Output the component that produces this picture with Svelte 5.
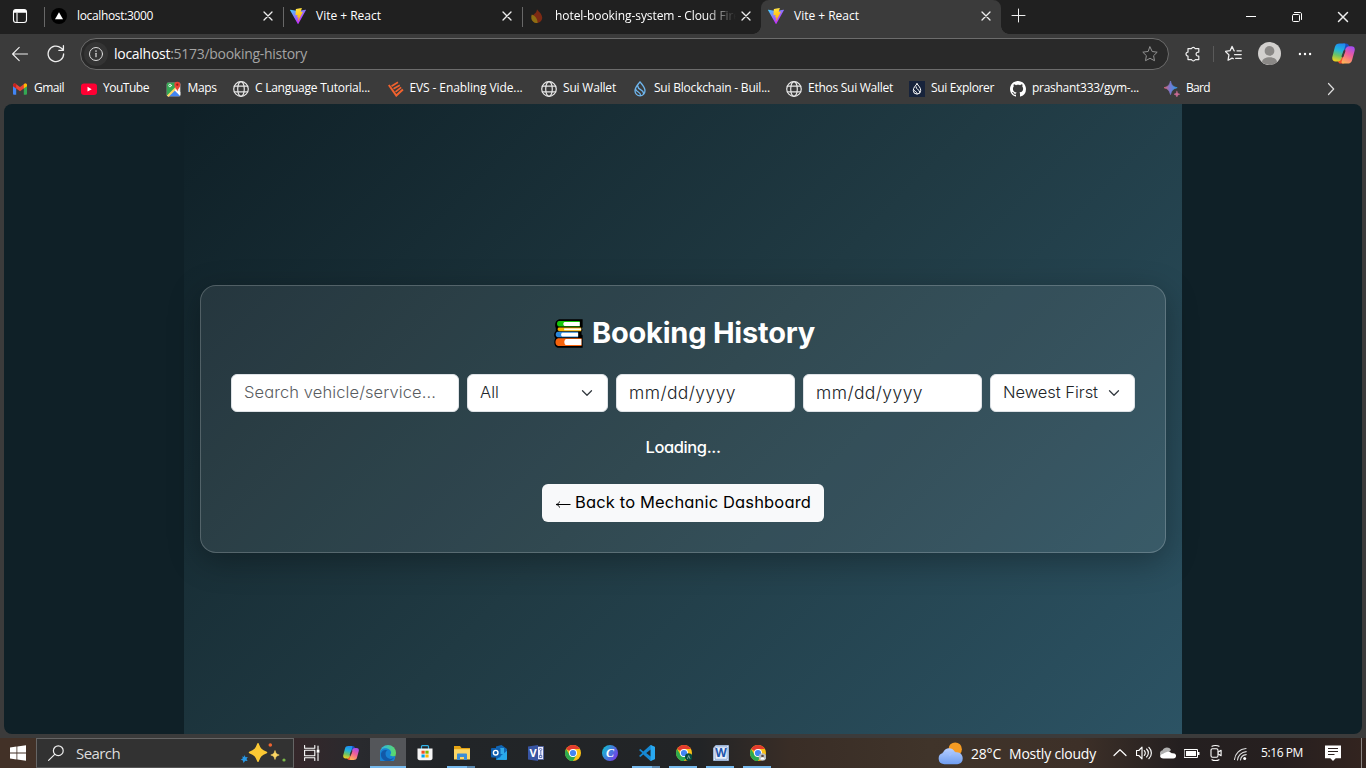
<script>
  // Spreads a label over the given width through its letter spacing.
  function fit(node, width) {
    const natural = node.getBoundingClientRect().width;
    node.style.letterSpacing = `${(width - natural) / node.textContent.length}px`;
  }

  const tabs = [
    { icon: 'next', title: 'localhost:3000', w: 76 },
    { icon: 'vite', title: 'Vite + React', w: 65 },
    { icon: 'flame', title: 'hotel-booking-system - Cloud Fire', w: 185 },
    { icon: 'vite', title: 'Vite + React', w: 65, active: true }
  ];

  const bookmarks = [
    { icon: 'gmail', title: 'Gmail', w: 30, slot: 69 },
    { icon: 'youtube', title: 'YouTube', w: 46, slot: 84.5 },
    { icon: 'maps', title: 'Maps', w: 29, slot: 67.5 },
    { icon: 'globe', title: 'C Language Tutorial...', w: 115, slot: 154.5 },
    { icon: 'evs', title: 'EVS - Enabling Vide...', w: 113, slot: 153.5 },
    { icon: 'globe', title: 'Sui Wallet', w: 53, slot: 91 },
    { icon: 'sui', title: 'Sui Blockchain - Buil...', w: 116, slot: 154 },
    { icon: 'globe', title: 'Ethos Sui Wallet', w: 85, slot: 123 },
    { icon: 'suibox', title: 'Sui Explorer', w: 63, slot: 101 },
    { icon: 'github', title: 'prashant333/gym-...', w: 107, slot: 154 },
    { icon: 'bard', title: 'Bard', w: 24, slot: 60 }
  ];

  const apps = [
    { icon: 'copilot' },
    { icon: 'edge', state: 'active' },
    { icon: 'store' },
    { icon: 'folder', state: 'multi' },
    { icon: 'outlook' },
    { icon: 'visio' },
    { icon: 'chrome' },
    { icon: 'canva' },
    { icon: 'vscode', state: 'multi' },
    { icon: 'chromea', state: 'open' },
    { icon: 'word', state: 'open' },
    { icon: 'chromeb', state: 'open' }
  ];

  const tray = ['up', 'volume', 'cloud', 'battery', 'meet', 'wifi'];
</script>

{#snippet icon(name, size = 16)}
  <svg class="icon" width={size} height={size} viewBox="0 0 16 16" fill="none" stroke-linecap="round" stroke-linejoin="round">
    {#if name === 'next'}
      <circle cx="8" cy="8" r="8" fill="#000" /><path d="M8 4.3 12 11.2H4z" fill="#fff" />
    {:else if name === 'vite'}
      <g transform="scale(.0623)">
        <path fill="url(#g-vite)" d="M255.153 37.938L134.897 252.976c-2.483 4.44-8.862 4.466-11.382.048L.875 37.958c-2.746-4.814 1.371-10.646 6.827-9.67l120.385 21.517a6.537 6.537 0 0 0 2.322-.004l117.867-21.483c5.438-.991 9.574 4.796 6.877 9.62Z" />
        <path fill="url(#g-bolt)" d="M185.432.063L96.44 17.501a3.268 3.268 0 0 0-2.634 3.014l-5.474 92.456a3.268 3.268 0 0 0 3.997 3.378l24.777-5.718c2.318-.535 4.413 1.507 3.936 3.838l-7.361 36.047c-.495 2.426 1.782 4.5 4.151 3.78l15.304-4.649c2.372-.72 4.652 1.36 4.15 3.788l-11.698 56.621c-.732 3.542 3.979 5.473 5.943 2.437l1.313-2.028l72.516-144.72c1.215-2.423-.88-5.186-3.54-4.672l-25.505 4.922c-2.396.462-4.435-1.77-3.759-4.114l16.646-57.705c.677-2.35-1.37-4.583-3.769-4.113Z" />
      </g>
    {:else if name === 'flame'}
      <path fill="#7c2a14" d="M8 1.2C9 3.4 12.9 5.2 13.2 9.5c.2 3-2.3 5.4-5.2 5.4S3 13 3 10c0-2 1.3-3.200 2.800-4.400C7.200 4.400 7.800 3 8 1.200z" />
      <path fill="#8d6d12" d="M2.800 6.500C5.500 7.500 8.500 10 8.600 15 5 15.200 2.500 13 2.300 10c-.1-1.500.1-2.500.5-3.500z" />
    {:else if name === 'close'}
      <path d="m4 4 8 8M12 4 4 12" stroke="#eee" stroke-width="1.3" />
    {:else if name === 'gmail'}
      <path fill="#4285f4" d="M1 4.500v8.300c0 .5.4.9.900.9h2.300V7.500z" /><path fill="#34a853" d="M11.800 13.700h2.300c.5 0 .9-.4.9-.9V4.500l-3.200 3z" />
      <path fill="#ea4335" d="M1 4.800V3.900C1 2.600 2.500 2 3.500 2.700L8 6l4.500-3.300C13.500 2 15 2.600 15 3.900v.9L11.800 7.600 8 10.300 4.200 7.600z" /><path fill="#fbbc04" d="M11.800 3.200v4.400L15 5.200V3.900c0-1.300-1.500-1.900-2.500-1.200z" /><path fill="#c5221f" d="M1 3.900v1.300l3.200 2.400V3.200l-.7-.5C2.500 2 1 2.600 1 3.900z" />
    {:else if name === 'youtube'}
      <rect y="2.500" width="16" height="11.500" rx="3" fill="#ff0033" /><path d="m6.500 5.800 4.200 2.400-4.200 2.400z" fill="#fff" />
    {:else if name === 'maps'}
      <rect x=".8" y="1.800" width="13.500" height="13.500" rx="1.200" fill="#eee" /><path d="M.8 14V3c0-.7.500-1.200 1.200-1.200h8L9 8l-8.200 7z" fill="#34a853" /><path d="m2.500 15.300 6-6 5.800 6z" fill="#4285f4" /><path d="m1 14.500 8-8 1.500 1.500-8 8z" fill="#fdd663" /><path d="m8.500 9 5.800 5.500V11l-4-3z" fill="#fff" />
      <circle cx="4" cy="4.500" r="1.300" stroke="#fff" stroke-width=".8" />
      <path d="M11.300 10.500C11 8 8.300 6.500 8.300 3.700a3 3 0 1 1 6 0c0 2.800-2.700 4.300-3 6.800z" fill="#ea4335" /><circle cx="11.300" cy="3.700" r="1.100" fill="#8e1f16" />
    {:else if name === 'globe'}
      <g stroke="#e6e6e6" stroke-width="1.200"><circle cx="8" cy="8" r="7.300" /><ellipse cx="8" cy="8" rx="3.300" ry="7.300" /><path d="M1.300 5.200h13.400M1.300 10.800h13.400" /></g>
    {:else if name === 'evs'}
      <path d="M.8 4 8.300 14.600l6.600-6" stroke="#f2622e" stroke-width="2" stroke-linecap="butt" stroke-linejoin="miter" /><path d="M3.500 5.200 10 1.200M5.500 7.800l6.300-3.600M7.500 10.800l5.700-4.500" stroke="#f2622e" stroke-width="1.600" stroke-linecap="butt" />
    {:else if name === 'sui'}
      <path d="M8 .8c2 2.700 5 5.400 5 9a5 5 0 0 1-10 0c0-3.600 3-6.300 5-9zM6 5.200c-.8 4 6.500 3 5.500 8M3.800 8.500c1.200 3.200 4.600 2 4.800 5.800" stroke="#6fb6ee" stroke-width="1.300" />
    {:else if name === 'suibox'}
      <path fill="#17233b" d="M0 0h16v16H0z" /><path d="M8 2.800c1.300 1.800 3.700 3.800 3.700 6.600a3.700 3.700 0 0 1-7.400 0c0-2.800 2.400-4.800 3.700-6.600zM7 5.800c-.5 3 4 2.200 3.700 5.500M4.700 8.800c1 2.300 3.400 1.400 3.500 4" stroke="#fff" stroke-width="1" />
    {:else if name === 'github'}
      <path fill="#fff" d="M8 0C3.580 0 0 3.580 0 8c0 3.540 2.290 6.530 5.470 7.590.4.070.55-.17.55-.38 0-.19-.01-.82-.01-1.490-2.010.37-2.530-.49-2.690-.94-.09-.23-.48-.94-.82-1.130-.28-.15-.68-.52-.01-.53.63-.01 1.080.58 1.230.82.72 1.210 1.870.87 2.330.66.07-.52.28-.87.51-1.070-1.780-.2-3.640-.89-3.640-3.950 0-.87.31-1.590.82-2.150-.08-.2-.36-1.020.08-2.120 0 0 .67-.21 2.200.82.64-.18 1.320-.27 2-.27s1.360.09 2 .27c1.530-1.040 2.200-.82 2.200-.82.44 1.100.16 1.920.08 2.120.51.56.82 1.270.82 2.150 0 3.070-1.870 3.750-3.650 3.950.29.25.54.73.54 1.480 0 1.070-.01 1.930-.01 2.200 0 .21.15.46.55.38A8.010 8.010 0 0 0 16 8c0-4.420-3.580-8-8-8z" />
    {:else if name === 'bard'}
      <path d="M6.500 0C7.500 4.200 9 5.700 13.200 6.700 9 7.700 7.500 9.400 6.500 13.600 5.500 9.400 4 7.700-.2 6.700 4 5.700 5.500 4.200 6.500 0z" fill="url(#g-bard)" stroke="url(#g-bard)" stroke-width=".7" /><path d="M12.900 10.300c.5 1.900 1 2.400 2.900 2.900-1.900.5-2.400 1-2.900 2.800-.5-1.800-1-2.300-2.900-2.800 1.900-.5 2.400-1 2.900-2.900z" fill="#c86a94" stroke="#c86a94" stroke-width=".5" />
    {:else if name === 'workspace'}
      <rect x="1.500" y="1.500" width="13" height="13" rx="2.500" stroke="#fff" stroke-width="1.100" /><path d="M1.500 4.800V4c0-1.500 1-2.500 2.500-2.500h8c1.500 0 2.500 1 2.500 2.500v.8z" fill="#fff" /><path d="M5 5v9.500" stroke="#fff" stroke-width="1.100" />
    {:else if name === 'back'}
      <path d="M15.500 8H.8M7.200 1.300.6 8l6.600 6.700" stroke="#eee" stroke-width="1.150" />
    {:else if name === 'reload'}
      <path d="M14.800 8A6.900 6.900 0 1 1 12.500 2.700l1.800 1.600M14.600.6v4.100h-4.100" stroke="#eee" stroke-width="1.150" />
    {:else if name === 'info'}
      <circle cx="8" cy="8" r="6.500" stroke="#ddd" /><path d="M8 7.300v3.400" stroke="#ddd" stroke-width="1.200" /><circle cx="8" cy="5.100" r=".8" fill="#ddd" />
    {:else if name === 'star'}
      <path d="m8 .9 2.200 4.600 5 .7-3.600 3.500.9 5L8 12.300l-4.500 2.400.9-5L.8 6.200l5-.7z" stroke="#929292" />
    {:else if name === 'puzzle'}
      <path d="M3 2.600h3.500a1.900 1.900 0 0 1 3.600 0h3.700v3.500c-3.600-.3-3.600 4.400 0 4.100v3.400h-3.600a1.900 1.900 0 0 1-3.600 0H3v-3.500a2 2 0 0 1 0-4z" stroke="#eee" stroke-width="1.200" />
    {:else if name === 'favorites'}
      <path d="M8.800 5.500H8.500L6.700 1.300 4.800 5.400l-4.300.7 3.200 3.200-.8 5 3.800-2 1.200.6M11.300 5.500h4M9 9h6.300M10 12.500h5.300" stroke="#eee" stroke-width="1.200" />
    {:else if name === 'avatar'}
      <circle cx="8" cy="8" r="8" fill="#d2d0ce" /><circle cx="8" cy="6.200" r="3.400" fill="#8a8886" /><path d="M2.800 14c0-4.500 10.400-4.500 10.400 0A8 8 0 0 1 2.800 14z" fill="#8a8886" />
    {:else if name === 'dots'}
      <g fill="#fff"><circle cx="2.200" cy="8" r="1.350" /><circle cx="8" cy="8" r="1.350" /><circle cx="13.800" cy="8" r="1.350" /></g>
    {:else if name === 'copilot'}
      <path d="M7.500 1h2.300c1.300 0 1.800.7 2.200 2l.6 1.800c-2.200-.3-3.100.4-3.700 2.200z" fill="#1a4fc0" />
      <path d="M8.500 15H6.200c-1.300 0-1.700-.7-2.100-2l-.6-1.800c2.200.3 3-.4 3.600-2.200z" fill="#f8502c" />
      <path d="M5.300 1h3c1.200 0 1.200.8.900 1.800L6.800 11c-.6 2-1.400 2.500-2.800 2.500H2.500C.6 13.500-.2 12 .3 10L2 3.500C2.500 1.700 3.500 1 5.300 1z" fill="url(#g-cop1)" />
      <path d="M10.700 15h-3c-1.200 0-1.200-.8-.9-1.800L9.200 5.500C9.700 3.800 10.500 3 12 3h1.500c2 0 2.700 1.400 2.200 3.300L14 12.500c-.5 1.800-1.500 2.500-3.300 2.500z" fill="url(#g-cop2)" />
      <path d="M8.700 6.200 7.300 10" stroke="#3b3b3b" stroke-width="1.300" />
    {:else if name === 'right'}
      <path d="m5.500 2.500 5.200 5.500-5.200 5.500" stroke="#ddd" stroke-width="1.200" />
    {:else if name === 'plus'}
      <path d="M8.500 2v13M2 8.500h13" stroke="#eee" />
    {:else if name === 'minimize'}
      <path d="M3 7.500h10" stroke="#fff" stroke-linecap="butt" />
    {:else if name === 'restore'}
      <rect x="3.500" y="5.500" width="7" height="7" rx="1" stroke="#fff" /><path d="M5.500 3.500H11c1 0 1.500.7 1.500 1.500v5.500" stroke="#fff" />
    {:else if name === 'windows'}
      <path fill="#fff" d="m0 2.400 6.500-.9v6.100H0zM7.300 1.400 16 .2v7.400H7.300zM0 8.400h6.500v6.100L0 13.600zM7.300 8.400H16v7.400l-8.700-1.200z" />
    {:else if name === 'search'}
      <circle cx="10.300" cy="5.700" r="4.900" stroke="#eee" stroke-width="1.200" /><path d="M6.700 9.300.6 15.400" stroke="#eee" stroke-width="1.200" />
    {:else if name === 'taskview'}
      <path d="M.6.500v2.700h10.200V.5M.6 15.500v-2.700h10.200v2.700M.6 5.200h10.200v5.600H.6zM14 1v3.500M14 8.500v7" stroke="#fff" stroke-width="1.100" /><path d="M12.700 4.700h2.700v3h-2.700z" fill="#fff" />
    {:else if name === 'edge'}
      <circle cx="8" cy="8" r="8" fill="url(#g-edge)" /><path d="M0 8C.5 3.800 4 2.800 6.500 3.300c3 .5 4.600 2.600 4.600 4.400 0 1.400-1 1.700-1 2.400 0 1 2.500 1.800 5 .6A8 8 0 1 1 0 8z" fill="#1781d2" /><path d="M1 8.500C2 4.500 6 4.400 7.600 5.500 5 6 4.700 10.500 7.500 12.800c2 1.700 4.800 1.400 6.600-.3C10.500 19 0 16.500 1 8.500z" fill="#1259a8" />
    {:else if name === 'store'}
      <path d="M4.500 4V1.600c0-.5.3-.9.900-.9h5.200c.6 0 .9.400.900.9V4" stroke="#34b4e9" stroke-width="1.200" /><path d="M.5 3.500h15V13c0 1.300-.8 2.200-2.200 2.200H2.700C1.300 15.200.5 14.300.5 13z" fill="#f5f5f5" /><path fill="#f25022" d="M4.500 5.700h3.200v3H4.500z" /><path fill="#7fba00" d="M8.400 5.700h3.200v3H8.400z" /><path fill="#00a4ef" d="M4.500 9.500h3.200v3H4.500z" /><path fill="#ffb900" d="M8.400 9.500h3.200v3H8.400z" />
    {:else if name === 'folder'}
      <path d="M0 1h6l1.500 2H16v11H0z" fill="#e5a313" /><path d="M0 4.200h16v10.300H0z" fill="#fdd665" /><path d="M3 15V9.800c0-.7.400-1.200 1-1.200h8c.6 0 1 .5 1 1.200V15h-3v-3H6v3z" fill="#3c8dd5" />
    {:else if name === 'outlook'}
      <path d="M5 1.500 10.500 0 16 4v9.500c0 .8-.5 1.200-1.200 1.200H5z" fill="#1066b5" /><path d="M6 3h7v6H6z" fill="#32a9e7" /><path d="m5 14.700 11-9v8.500c0 .5-.4.800-1 .8z" fill="#28a8ea" /><rect y="3" width="9.500" height="9.500" rx="1" fill="#0f5fae" /><circle cx="4.700" cy="7.700" r="2.300" stroke="#fff" stroke-width="1.400" />
    {:else if name === 'visio'}
      <path d="M9 1.500h6.500v13H9z" fill="#eef" stroke="#465a9e" stroke-width=".8" /><path d="M0 1.500 10 0v16L0 14.500z" fill="#3955a3" /><text x="1.400" y="12" font-size="11" font-weight="700" fill="#fff" stroke="none">V</text><path d="M12.800 3.300 14 4.500l-1.200 1.200-1.200-1.200zM12.800 6v4M11.800 10.500h2v2h-2z" stroke="#3955a3" stroke-width=".8" />
    {:else if name === 'chrome' || name === 'chromea' || name === 'chromeb'}
      <circle cx="8" cy="8" r="8" fill="#fbc116" /><path d="M8 8 1.100 4A8 8 0 0 1 14.900 4H8z" fill="#e33b2e" /><path d="M1.100 4 4.600 10 8 12l-.7 4A8 8 0 0 1 1.100 4z" fill="#2da94f" /><path d="M4.500 10 8 8l3.500 2-3.500 6H7.300A8 8 0 0 1 4 14.900z" fill="#2da94f" /><circle cx="8" cy="8" r="4" fill="#fff" /><circle cx="8" cy="8" r="3.100" fill="#4285f4" />
      {#if name === 'chromea'}<circle cx="12.700" cy="12" r="3.700" fill="#064b3d" /><path d="m11.500 13.500 1.200-3 1.200 3" stroke="#9cc9bc" stroke-width=".7" />{/if}
      {#if name === 'chromeb'}<circle cx="12.500" cy="12" r="3.800" fill="#b9bdc1" /><circle cx="12.500" cy="11" r="1.300" fill="#5d4b45" /><path d="M10.500 14.500c0-3 4-3 4 0" fill="#fff" />{/if}
    {:else if name === 'canva'}
      <circle cx="8" cy="8" r="8" fill="url(#g-canva)" /><text x="4" y="12.200" font-size="12" font-style="italic" font-weight="700" fill="#fff" class="serif">C</text>
    {:else if name === 'vscode'}
      <path d="M11.500 0 16 2v12l-4.500 2-7.200-6.500L1.400 12 0 11l3.300-3L0 5l1.400-1 2.900 2.400zm.2 4.500L7.200 8l4.500 3.500z" fill="#1688d3" /><path d="M11.700 0 16 2v12l-4.300 2z" fill="#29a8f0" />
    {:else if name === 'word'}
      <path d="M3 .5h12.500v15H.5V3.500z" fill="#fff" stroke="#9dbbe6" stroke-width=".8" /><path d="M3.700 1.800h10.500v12.500H2V3.500z" fill="#e9f0fa" stroke="#4d7cc4" stroke-width=".6" /><text x="2.300" y="12.300" font-size="12" font-weight="700" fill="#1d55ad" textLength="11.500" lengthAdjust="spacingAndGlyphs">W</text>
    {:else if name === 'weather'}
      <circle cx="11" cy="5.200" r="4.300" fill="#f59b23" /><path d="M4 14.800a3.600 3.600 0 0 1-.8-7.100C4 3.800 9.500 3.400 11 7.300c3-.7 5 1.600 4.800 4 0 2.200-1.600 3.500-3.600 3.500z" fill="url(#g-weather)" /><path d="M3.200 7.700c2-.7 3.500-.2 4.500 1.300M7.500 9.200c1-1.600 2-2 3.500-1.900" stroke="#9fc0ff" stroke-width=".7" />
    {:else if name === 'up'}
      <path d="m2 10.500 6-5.700 6 5.700" stroke="#fff" stroke-width="1.200" />
    {:else if name === 'volume'}
      <path d="M.5 5.500h2.300L6 2.200v11.600l-3.200-3.300H.5zM8.300 5.700c1.300 1.300 1.300 3.300 0 4.600M10.600 4c2.300 2.200 2.300 5.800 0 8M12.900 2.300c3.300 3.200 3.300 8.200 0 11.400" stroke="#fff" stroke-width="1.150" />
    {:else if name === 'cloud'}
      <path d="M3 12A3.400 3.400 0 0 1 2.600 5.300C4 1.800 9.500 1.500 11 5L6 10z" fill="#b0b0b0" /><path d="M3.500 13.500c-4 0-4.200-3.500-1.700-4.300 2-.5 3-1.700 5-2.200 2.200-.5 4 .3 5 1.300 3-.6 4.600 1.200 4.200 3-.3 1.500-1.300 2.200-2.700 2.200z" fill="#fff" />
    {:else if name === 'battery'}
      <path d="M.5 4.500h13v8H.5z" stroke="#fff" stroke-linejoin="miter" /><path d="M2 6h10v5H2zM14 7h1.500v3H14z" fill="#fff" />
    {:else if name === 'meet'}
      <rect x="3" y="3.800" width="7" height="8.400" rx="1.500" stroke="#fff" stroke-width="1.100" /><path d="m10.300 7 2.800-1.700v5.400L10.300 9M4 1.300C5.500.3 9.500.3 11 1.300M4 14.700c1.500 1 5.500 1 7 0" stroke="#fff" stroke-width="1.100" />
    {:else if name === 'wifi'}
      <path d="M2.500 14.500C3 8.800 7.500 4 14 3.500M5.500 15c.4-4.300 3.800-8 8.700-8.400M8.500 15c.3-2.800 2.500-5.100 5.700-5.400" stroke="#ddd" stroke-width="1.100" /><circle cx="12.700" cy="13.500" r="1.500" fill="#fff" />
    {:else if name === 'notes'}
      <path d="M0 .5h16v12.700h-5.300L8 16l-2.700-2.800H0z" fill="#fff" /><path d="M3 3.500h10M3 6.500h10M3 9.500h6.500" stroke="#2c2220" stroke-linecap="butt" />
    {:else if name === 'down'}
      <path d="m2 5 6 6 6-6" stroke="#343a40" stroke-width="1.700" />
    {:else if name === 'books'}
      <path d="M2.800.2h13v4.200l-.5.8.5.8-.6 1v1.500l.6.500v6.800H2.200C-.1 15.800-.2 12 .8 10.500-.2 9.800-.1 7.300 1 6.800V5C.3 4 .4.800 2.800.2z" fill="#000" />
      <path d="M2.800 1.100h11.400v3H2.800c-1.500 0-1.500-3 0-3z" fill="#16c60c" /><path d="M5.800 1.600h8.400v2.300H5.800c-.9-.3-.9-2 0-2.300z" fill="#fff" />
      <path d="M2.500 4.700h12.500v2H2.800c-1-.2-1-1.600-.3-2z" fill="#f7b500" /><path d="M5.600 5.200H15v1H5.600z" fill="#fff" />
      <path d="M2 7.100h11.300v3H2c-1.400-.2-1.400-2.800 0-3z" fill="#2c87d8" /><path d="M4.500 7.600h8.800v2.100H4.500c-.8-.3-.8-1.800 0-2.100z" fill="#fff" />
      <path d="M2.300 10.600h12.900v4.300H2.300c-2-.2-2-4.100 0-4.300z" fill="#f7630c" /><path d="M6.600 11h8.500v3.400H6.600c-1.200-.4-1.200-3 0-3.400z" fill="#fff" />
    {/if}
  </svg>
{/snippet}

<svg class="defs" width="0" height="0" aria-hidden="true">
  <defs>
    <linearGradient id="g-vite" x1="0" y1="0" x2=".6" y2=".8"><stop stop-color="#41d1ff" /><stop offset="1" stop-color="#bd34fe" /></linearGradient>
    <linearGradient id="g-bolt" x1=".4" y1="0" x2=".55" y2="1"><stop stop-color="#ffea83" /><stop offset=".1" stop-color="#ffdd35" /><stop offset="1" stop-color="#ffa800" /></linearGradient>
    <linearGradient id="g-bard" x1="0" y1="0" x2="1" y2="0"><stop stop-color="#e2626b" /><stop offset=".45" stop-color="#7b78cf" /><stop offset="1" stop-color="#2b9bea" /></linearGradient>
    <linearGradient id="g-cop1" x1=".5" y1="0" x2=".3" y2="1"><stop stop-color="#1f8cf0" /><stop offset=".35" stop-color="#22b5dc" /><stop offset=".65" stop-color="#6cc366" /><stop offset="1" stop-color="#f3d21b" /></linearGradient>
    <linearGradient id="g-cop2" x1=".7" y1="0" x2=".3" y2="1"><stop stop-color="#a44cf0" /><stop offset=".45" stop-color="#ee5d9c" /><stop offset=".75" stop-color="#fb8a72" /><stop offset="1" stop-color="#fbb35a" /></linearGradient>
    <linearGradient id="g-edge" x1="0" y1=".3" x2="1" y2=".5"><stop stop-color="#2bb3e8" /><stop offset="1" stop-color="#5fdc62" /></linearGradient>
    <linearGradient id="g-canva" x1="0" y1=".2" x2="1" y2=".8"><stop stop-color="#10bfd0" /><stop offset="1" stop-color="#7a35e8" /></linearGradient>
    <linearGradient id="g-weather" x1="0" y1="0" x2="0" y2="1"><stop stop-color="#b8d0ff" /><stop offset="1" stop-color="#6f9df0" /></linearGradient>
  </defs>
</svg>

<div class="screen">
  <header class="tabstrip">
    <div class="workspace">{@render icon('workspace')}</div>
    {#each tabs as tab}
      <div class="tab" class:active={tab.active}>
        {@render icon(tab.icon)}
        <div class="tabtitle" class:fade={tab.icon === 'flame'}><span class="label" use:fit={tab.w}>{tab.title}</span></div>
        {@render icon('close')}
      </div>
    {/each}
    <div class="newtab">{@render icon('plus')}</div>
    <div class="window-buttons">
      <div>{@render icon('minimize')}</div>
      <div>{@render icon('restore')}</div>
      <div>{@render icon('close', 18)}</div>
    </div>
  </header>

  <div class="toolbar">
    <div class="nav">{@render icon('back')}{@render icon('reload', 18)}</div>
    <div class="address">
      <div class="site">{@render icon('info')}</div>
      <span class="label url" use:fit={193}><b>localhost</b>:5173/booking-history</span>
      {@render icon('star')}
    </div>
    <div class="actions">
      <div class="puzzle">{@render icon('puzzle')}</div>
      <div class="favs">{@render icon('favorites', 17)}</div>
      {@render icon('avatar', 23)}
      <div class="dots">{@render icon('dots', 14)}</div>
      {@render icon('copilot', 23)}
    </div>
  </div>

  <nav class="bookmarks">
    {#each bookmarks as mark}
      <div class="bookmark" style="width: {mark.slot}px">
        {@render icon(mark.icon)}
        <span class="label" use:fit={mark.w}>{mark.title}</span>
      </div>
    {/each}
    <div class="overflow">{@render icon('right')}</div>
  </nav>

  <main class="viewport">
    <div class="page">
      <section class="card">
        <h2>{@render icon('books', 29)}<span class="label" use:fit={223}>Booking History</span></h2>
        <div class="filters">
          <div class="field search"><span class="label placeholder" use:fit={192}>Search vehicle/service...</span></div>
          <div class="field all"><span class="label" use:fit={19}>All</span>{@render icon('down', 12)}</div>
          <div class="field date"><span class="label" use:fit={107}>mm/dd/yyyy</span></div>
          <div class="field date"><span class="label" use:fit={107}>mm/dd/yyyy</span></div>
          <div class="field sort"><span class="label" use:fit={95}>Newest First</span>{@render icon('down', 12)}</div>
        </div>
        <p><span class="label" use:fit={75}>Loading...</span></p>
        <button>
          <svg class="icon" width="16" height="10" viewBox="0 0 16 10" fill="none" stroke="#000"><path d="M15.500 6.500H1M4.500 3.500C4 5.300 2.800 6.300 1 6.500c1.800.2 3 1.200 3.500 3" /></svg>
          <span class="label" use:fit={236}>Back to Mechanic Dashboard</span>
        </button>
      </section>
    </div>
  </main>

  <footer class="taskbar">
    <div class="start">{@render icon('windows')}</div>
    <div class="searchbox">
      {@render icon('search')}
      <span class="label" use:fit={44}>Search</span>
      <svg class="icon" width="46" height="20" viewBox="0 0 46 20">
        <path d="M18 .8c1.800 5.200 3.300 6.700 8.500 8.700-5.200 2-6.700 3.500-8.500 8.700-1.800-5.200-3.300-6.700-8.500-8.700C14.700 7.500 16.200 6 18 .8z" fill="#fcc934" stroke="#fcc934" stroke-width="1.500" stroke-linejoin="round" />
        <path d="M35 7.500c.8 3 1.500 3.500 4.200 4.500-2.700 1-3.400 1.500-4.200 4.500-.8-3-1.500-3.500-4.200-4.500 2.700-1 3.400-1.500 4.200-4.500z" fill="#fdd663" stroke="#fdd663" stroke-width=".6" />
        <path d="m4.500 12 1 2.200 2.300-.2-1.300 2 1.100 2-2.400-.3L3.500 20l-.6-2.500-2.200-.7 2-1.300-.2-2.300 1.500.8z" fill="#2799e8" />
        <circle cx="30.300" cy="2" r="1.800" fill="#ef6330" /><circle cx="44" cy="17" r="1.600" fill="#7ab648" />
      </svg>
    </div>
    <div class="taskview">{@render icon('taskview')}</div>
    {#each apps as app}
      <div class="app {app.state ?? ''}">{@render icon(app.icon)}</div>
    {/each}
    <div class="weather">
      {@render icon('weather', 25)}
      <span class="label" use:fit={30}>28°C</span>
      <span class="label" use:fit={87}>Mostly cloudy</span>
    </div>
    <div class="tray">
      {#each tray as item}
        <div>{@render icon(item)}</div>
      {/each}
    </div>
    <span class="label clock" use:fit={42}>5:16 PM</span>
    <div class="notes">{@render icon('notes')}</div>
    <div class="desktop"></div>
  </footer>
</div>

<style>
  :global(body) { background: #3b3b3b; overflow: hidden; }
  .defs { position: absolute; }
  .icon { display: block; flex: none; font-family: "Open Sans", sans-serif; }
  .serif { font-family: "Liberation Serif", serif; }
  .label { display: inline-block; flex: none; white-space: nowrap; }
  .screen {
    width: 1366px; height: 768px; box-sizing: border-box;
    display: flex; flex-direction: column;
    background: #3b3b3b; color: #fff;
    font-family: "Open Sans", "Noto Sans", sans-serif; font-size: 12px;
  }

  .tabstrip { display: flex; height: 34px; background: #202020; }
  .workspace { width: 44px; box-sizing: border-box; padding: 8px 0 0 12px; }
  .tab {
    width: 239px; box-sizing: border-box; display: flex; align-items: center;
    padding: 0 7px 2px 7px; background: linear-gradient(#686868, #686868) 0 7px / 1px 20px no-repeat;
  }
  .tabtitle { flex: 1; min-width: 0; margin-left: 10px; line-height: 20px; }
  .fade { -webkit-mask-image: linear-gradient(90deg, #000 150px, transparent 181px); mask-image: linear-gradient(90deg, #000 150px, transparent 181px); }
  .tab.active { position: relative; width: 240px; background: #3b3b3b; border-radius: 8px 8px 0 0; }
  .tab.active::before, .tab.active::after {
    content: ""; position: absolute; bottom: 0; left: -8px; width: 8px; height: 8px;
    background: radial-gradient(circle at 0 0, transparent 7.5px, #3b3b3b 8px);
  }
  .tab.active::after { left: auto; right: -8px; background: radial-gradient(circle at 100% 0, transparent 7.5px, #3b3b3b 8px); }
  .newtab { padding: 7px 0 0 9px; flex: 1; }
  .window-buttons { display: flex; width: 138px; }
  .window-buttons div { flex: 1; display: grid; place-items: center; }

  .toolbar { display: flex; height: 39px; align-items: center; }
  .nav { width: 80px; box-sizing: border-box; display: flex; align-items: center; gap: 19px; padding: 0 0 0 12px; }
  .address {
    width: 1089px; height: 32px; box-sizing: border-box; display: flex; align-items: center;
    border: 1px solid #6c6c6c; border-radius: 16px; background: #292929; padding: 0 10px 0 3px; margin-top: 1px;
  }
  .site { width: 24px; height: 24px; border-radius: 12px; background: #343434; display: grid; place-items: center; }
  .url { margin: -1px auto 0 6px; font-size: 14px; color: #a4a4a4; }
  .url b { font-weight: 400; color: #fff; }
  .actions { display: flex; align-items: center; flex: 1; padding: 0 0 0 16px; }
  .puzzle { padding-right: 12px; border-right: 1px solid #5a5a5a; margin-right: 11px; }
  .favs { width: 33px; }
  .dots { padding: 0 20px 0 17px; }

  .bookmarks { display: flex; height: 31px; align-items: center; padding-left: 12px; }
  .bookmark { display: flex; align-items: center; gap: 6px; }
  .bookmark .label { margin-top: -2px; }
  .overflow { margin-left: 98.500px; }

  .viewport {
    height: 630px; margin: 0 4px; display: flex; justify-content: center;
    background: #0f2027; border-radius: 8px; overflow: hidden;
  }
  .page {
    width: 998px; box-sizing: border-box; padding: 0 16px; display: grid; align-items: center;
    background: linear-gradient(135deg, #0f2027, #203a43, #2c5364);
  }
  .card {
    height: 268px; box-sizing: border-box; padding: 30px;
    border: 1px solid rgba(255, 255, 255, .2); border-radius: 16px;
    background: rgba(255, 255, 255, .08); box-shadow: 0 8px 32px rgba(0, 0, 0, .3);
    font-family: Inter, "Open Sans", sans-serif; font-feature-settings: "cv11"; font-size: 16.500px;
    display: flex; flex-direction: column; align-items: center;
  }
  h2 { margin: 0 0 24px; height: 34px; display: flex; align-items: center; gap: 9px; padding-left: 3px; font-size: 29px; line-height: 34px; font-weight: 650; }
  .filters { display: flex; gap: 8px; width: 904px; }
  .field {
    height: 38px; box-sizing: border-box; padding: 0 12px; display: flex; align-items: center; justify-content: space-between;
    background: #fff; border: 1px solid #dee2e6; border-radius: 6px; color: #212529; font-weight: 350;
  }
  .field .label, button .label { margin-top: -2px; }
  .search { width: 228px; }
  .all { width: 141px; padding-right: 14px; }
  .date { width: 179px; font-size: 17.500px; }
  .sort { width: 145px; padding-right: 14px; }
  .placeholder { color: #595c5f; }
  p { margin: 23px 0 25px; height: 24px; line-height: 24px; font-weight: 500; }
  button {
    width: 282px; height: 38px; border: 0; border-radius: 6px; background: #f8f9fa; color: #000;
    display: flex; align-items: center; justify-content: center; gap: 4px; padding: 0; font: inherit; font-weight: 380; font-feature-settings: inherit;
  }

  .taskbar {
    display: flex; height: 30px; margin-top: 4px; align-items: stretch;
    background: linear-gradient(90deg, #423127 0, #423127 36px, #35272a 293px, #292a2e 360px, #222528 440px, #222426 700px, #392d26 790px, #40342a 930px, #3d3028 1080px, #241f20 1180px, #261f1f 1280px, #33241f 1366px);
  }
  .start { width: 36px; box-sizing: border-box; padding: 7px 0 0 10px; }
  .searchbox {
    width: 258px; box-sizing: border-box; display: flex; align-items: center;
    background: #323232; border: 1px solid #656565; border-bottom-color: #555; padding: 0 7px 0 11px; font-size: 15px; color: #ddd;
  }
  .searchbox .label { margin: 0 auto 0 12px; }
  .taskview { width: 39px; box-sizing: border-box; padding: 7px 0 0 10px; }
  .app { width: 37px; box-sizing: border-box; padding: 7px 0 0 10px; background: no-repeat 3px 28px / 28px 2px; }
  .app.active { background: linear-gradient(#76b9ed, #76b9ed) 0 28px / 36px 2px no-repeat, linear-gradient(#54565a, #54565a) 0 0 / 36px 30px no-repeat; }
  .app.open { background-image: linear-gradient(#76b9ed, #76b9ed); }
  .app.multi { background-image: linear-gradient(90deg, #76b9ed 20px, #5a87ad 20px); }
  .weather { margin-left: 161px; display: flex; align-items: center; font-size: 14px; width: 170px; }
  .weather .label { margin-left: 8px; }
  .weather .label + .label { margin-left: 8px; }
  .tray { display: flex; align-items: center; }
  .tray div { width: 24px; display: grid; place-items: center; }
  .clock { align-self: center; margin-left: 9px; margin-top: -1px; }
  .notes { margin-left: 22px; padding-top: 7px; width: 36px; }
  .desktop { width: 5px; box-sizing: border-box; border-left: 1px solid #8a8583; }
</style>
